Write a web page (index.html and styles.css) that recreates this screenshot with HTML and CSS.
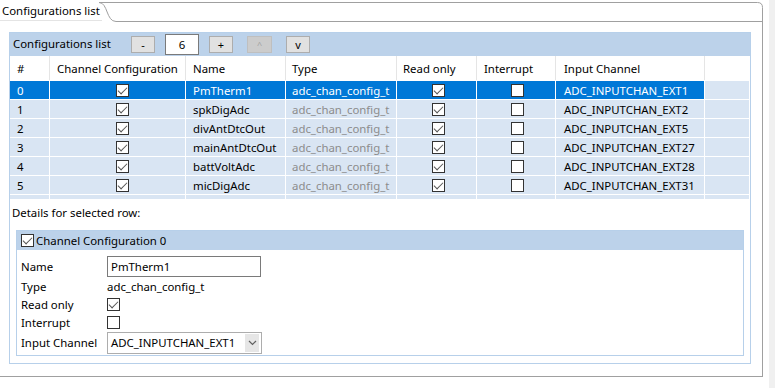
FILE: index.html
```html
<!DOCTYPE html>
<html lang="en">
<head>
    <meta charset="UTF-8">
    <title>Configurations list</title>
    <link rel="stylesheet" href="styles.css">
</head>
<body>
<div class="page">
    <div class="folder">
        <div class="tabbar">
            <svg class="tabline" width="763" height="22" viewBox="0 0 763 22">
                <path d="M0 20.5H102" stroke="#e4e4e4" fill="none"/>
                <path d="M99 2.5C108 2.5 106 21.5 116 21.5H762" stroke="#a0a0a0" fill="none"/>
                <path d="M99 2.5H757.5Q762.5 2.5 762.5 7.5V22" stroke="#a0a0a0" fill="none"/>
            </svg>
            <span class="tab">Configurations list</span>
        </div>

        <div class="panel">
            <section class="block">
                <div class="block-head">
                    <span class="block-title">Configurations list</span>
                    <span class="btn">-</span>
                    <span class="count">6</span>
                    <span class="btn plus">+</span>
                    <span class="btn up off">^</span>
                    <span class="btn down">v</span>
                </div>

                <div class="grid">
                    <div class="row head">
                        <div class="c c-num">#</div>
                        <div class="c c-cfg">Channel Configuration</div>
                        <div class="c c-name">Name</div>
                        <div class="c c-type">Type</div>
                        <div class="c c-ro">Read only</div>
                        <div class="c c-int">Interrupt</div>
                        <div class="c c-chan">Input Channel</div>
                        <div class="c c-fill"></div>
                    </div>
                    <div class="row sel">
                        <div class="c c-num">0</div>
                        <div class="c c-cfg"><span class="cb on"></span></div>
                        <div class="c c-name">PmTherm1</div>
                        <div class="c c-type">adc_chan_config_t</div>
                        <div class="c c-ro"><span class="cb on"></span></div>
                        <div class="c c-int"><span class="cb"></span></div>
                        <div class="c c-chan">ADC_INPUTCHAN_EXT1</div>
                        <div class="c c-fill"></div>
                    </div>
                    <div class="row">
                        <div class="c c-num">1</div>
                        <div class="c c-cfg"><span class="cb on"></span></div>
                        <div class="c c-name">spkDigAdc</div>
                        <div class="c c-type">adc_chan_config_t</div>
                        <div class="c c-ro"><span class="cb on"></span></div>
                        <div class="c c-int"><span class="cb"></span></div>
                        <div class="c c-chan">ADC_INPUTCHAN_EXT2</div>
                        <div class="c c-fill"></div>
                    </div>
                    <div class="row">
                        <div class="c c-num">2</div>
                        <div class="c c-cfg"><span class="cb on"></span></div>
                        <div class="c c-name">divAntDtcOut</div>
                        <div class="c c-type">adc_chan_config_t</div>
                        <div class="c c-ro"><span class="cb on"></span></div>
                        <div class="c c-int"><span class="cb"></span></div>
                        <div class="c c-chan">ADC_INPUTCHAN_EXT5</div>
                        <div class="c c-fill"></div>
                    </div>
                    <div class="row">
                        <div class="c c-num">3</div>
                        <div class="c c-cfg"><span class="cb on"></span></div>
                        <div class="c c-name">mainAntDtcOut</div>
                        <div class="c c-type">adc_chan_config_t</div>
                        <div class="c c-ro"><span class="cb on"></span></div>
                        <div class="c c-int"><span class="cb"></span></div>
                        <div class="c c-chan">ADC_INPUTCHAN_EXT27</div>
                        <div class="c c-fill"></div>
                    </div>
                    <div class="row">
                        <div class="c c-num">4</div>
                        <div class="c c-cfg"><span class="cb on"></span></div>
                        <div class="c c-name">battVoltAdc</div>
                        <div class="c c-type">adc_chan_config_t</div>
                        <div class="c c-ro"><span class="cb on"></span></div>
                        <div class="c c-int"><span class="cb"></span></div>
                        <div class="c c-chan">ADC_INPUTCHAN_EXT28</div>
                        <div class="c c-fill"></div>
                    </div>
                    <div class="row">
                        <div class="c c-num">5</div>
                        <div class="c c-cfg"><span class="cb on"></span></div>
                        <div class="c c-name">micDigAdc</div>
                        <div class="c c-type">adc_chan_config_t</div>
                        <div class="c c-ro"><span class="cb on"></span></div>
                        <div class="c c-int"><span class="cb"></span></div>
                        <div class="c c-chan">ADC_INPUTCHAN_EXT31</div>
                        <div class="c c-fill"></div>
                    </div>
                    <!-- next row is cut off by the table viewport -->
                    <div class="row cut">
                        <div class="c c-num"></div>
                        <div class="c c-cfg"></div>
                        <div class="c c-name"></div>
                        <div class="c c-type"></div>
                        <div class="c c-ro"></div>
                        <div class="c c-int"></div>
                        <div class="c c-chan"></div>
                        <div class="c c-fill"></div>
                    </div>
                </div>

                <p class="detail-label">Details for selected row:</p>

                <section class="detail">
                    <div class="detail-head">
                        <span class="cb on"></span>
                        <span class="detail-title">Channel Configuration 0</span>
                    </div>
                    <div class="form">
                        <span class="lbl">Name</span>
                        <span class="val"><span class="text-input">PmTherm1</span></span>
                        <span class="lbl">Type</span>
                        <span class="val">adc_chan_config_t</span>
                        <span class="lbl">Read only</span>
                        <span class="val"><span class="cb on"></span></span>
                        <span class="lbl">Interrupt</span>
                        <span class="val"><span class="cb"></span></span>
                        <span class="lbl">Input Channel</span>
                        <span class="val">
                            <span class="combo">
                                <span class="combo-text">ADC_INPUTCHAN_EXT1</span>
                                <span class="combo-arrow">
                                    <svg width="9" height="6" viewBox="0 0 9 6"><path d="M1 1L4.5 4.5L8 1" stroke="#606060" stroke-width="1.2" fill="none"/></svg>
                                </span>
                            </span>
                        </span>
                    </div>
                </section>
            </section>
        </div>
    </div>
    <div class="edge"></div>
</div>
</body>
</html>
```

FILE: styles.css
```css
* {
    box-sizing: border-box;
}

body {
    margin: 0;
    background: #fff;
    color: #000;
    font-family: "Noto Sans", "Open Sans", sans-serif;
    font-size: 11.4px;
}

.page {
    display: flex;
    height: 388px;
}

.folder {
    width: 763px;
}

/* grey strip at the right edge of the window */
.edge {
    width: 6px;
    margin-left: 6px;
    background: #f0f0f0;
}

/* tab header */
.tabbar {
    position: relative;
    height: 22px;
}

.tabline {
    position: absolute;
    left: 0;
    top: 0;
}

.tab {
    position: relative;
    display: block;
    padding: 2px 0 0 2px;
    line-height: 18px;
}

.panel {
    height: 355px;
    border-right: 1px solid #a0a0a0;
    border-bottom: 1px solid #a0a0a0;
    padding: 10px 0 0 9px;
}

/* section: Configurations list */
.block {
    width: 742px;
    border: 1px solid #b7d0ea;
    padding-bottom: 7px;
}

.block-head {
    display: flex;
    align-items: center;
    height: 23px;
    background: #bcd2ea;
    padding-left: 3px;
}

.block-title {
    width: 118px;
    line-height: 18px;
    margin-top: -1px;
}

.btn {
    display: flex;
    align-items: center;
    justify-content: center;
    width: 24px;
    height: 17px;
    background: #e1e1e1;
    border: 1px solid #adadad;
    font-size: 11px;
    line-height: 1;
}

.btn.plus {
    margin-left: 10px;
}

.btn.up {
    margin-left: 14px;
    width: 25px;
}

.btn.down {
    margin-left: 14px;
}

.btn.off {
    background: #cccccc;
    border-color: #bfbfbf;
    color: #a3a3a3;
    font-size: 9px;
}

.count {
    width: 34px;
    height: 21px;
    margin-left: 10px;
    background: #fff;
    border: 1px solid #7a7a7a;
    text-align: center;
    line-height: 19px;
}

/* table */
.grid {
    width: 739px;
}

.row {
    display: flex;
    height: 18px;
    margin-bottom: 1px;
}

.row.head {
    height: 24px;
}

.row.cut {
    height: 4px;
    margin-bottom: 0;
}

.c {
    display: flex;
    align-items: center;
    padding-left: 7px;
    background: #d9e5f3;
    border-right: 1px solid #fff;
    white-space: nowrap;
    overflow: hidden;
}

.row.head .c {
    background: #fff;
    border-right-color: #e5e5e5;
}

.row.sel .c {
    background: #0078d7;
    color: #fff;
}

.row.sel .c.c-fill {
    background: #d9e5f3;
}

.c-num  { width: 40px; }
.c-cfg  { width: 136px; }
.c-name { width: 100px; }
.c-type { width: 111px; padding-left: 6px; }
.c-ro   { width: 80px; padding-left: 6px; }
.c-int  { width: 79px; }
.c-chan { width: 149px; padding-left: 8px; }
.c-fill { flex: 1; border-right: none; }

.row .c-type {
    color: #8c8c8c;
}

.row.head .c-type {
    color: #000;
}

.row.sel .c-type {
    color: #fff;
}

.row:not(.head) .c-cfg { padding-left: 66px; }
.row:not(.head) .c-ro  { padding-left: 35px; }
.row:not(.head) .c-int { padding-left: 34px; }

/* checkbox */
.cb {
    position: relative;
    display: inline-block;
    flex: none;
    width: 13px;
    height: 13px;
    background: #fff;
    border: 1px solid #333;
}

.cb.on::after {
    content: "";
    position: absolute;
    left: 3px;
    top: 0;
    width: 4px;
    height: 8px;
    border: solid #555;
    border-width: 0 1px 1px 0;
    transform: rotate(45deg);
}

/* details */
.detail-label {
    margin: 5px 0 0 2px;
    height: 18px;
    line-height: 18px;
}

.detail {
    margin: 8px 6px 0;
    border: 1px solid #b7d0ea;
}

.detail-head {
    display: flex;
    align-items: center;
    height: 19px;
    padding-left: 4px;
    background: #bcd2ea;
}

.detail-title {
    margin-left: 2px;
    line-height: 18px;
}

.form {
    display: grid;
    grid-template-columns: 86px auto;
    grid-template-rows: 22px 19px 17px 18px 23px;
    padding: 5px 0 1px 4px;
}

.lbl,
.val {
    display: flex;
    align-items: center;
}

.text-input {
    width: 154px;
    height: 21px;
    padding-left: 3px;
    border: 1px solid #7a7a7a;
    line-height: 19px;
}

.combo {
    display: flex;
    align-items: center;
    width: 155px;
    height: 22px;
    padding: 0 2px 0 3px;
    border: 1px solid #adadad;
}

.combo-text {
    flex: 1;
}

.combo-arrow {
    display: flex;
    align-items: center;
    justify-content: center;
    width: 14px;
    height: 18px;
    background: #e6e6e6;
}
```
